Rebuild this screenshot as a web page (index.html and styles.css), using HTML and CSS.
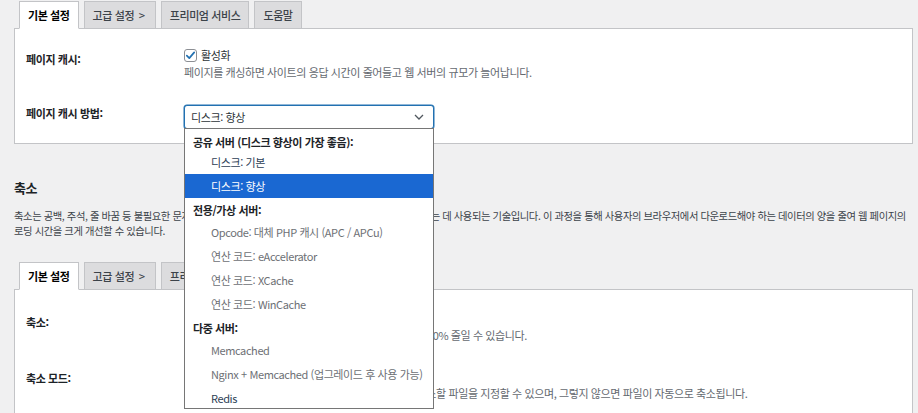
FILE: index.html
```html
<!DOCTYPE html>
<html lang="ko">
<head>
<meta charset="utf-8">
<title>캐시 설정</title>
<link rel="stylesheet" href="styles.css">
</head>
<body>
<div class="page">
  <nav class="tabs">
    <span class="tab active">기본 설정</span>
    <span class="tab">고급 설정 <span class="arrow">&gt;</span></span>
    <span class="tab">프리미엄 서비스</span>
    <span class="tab">도움말</span>
  </nav>
  <section class="panel">
    <div class="form-grid">
      <div class="th">페이지 캐시:</div>
      <div class="td">
        <label class="check"><span class="box"><svg width="13" height="13" viewBox="0 0 13 13"><path d="M2.8 6.6 L5.3 9.1 L10.2 3.4" fill="none" stroke="#2271b1" stroke-width="1.7" stroke-linecap="round" stroke-linejoin="round"/></svg></span>활성화</label>
        <p class="desc">페이지를 캐싱하면 사이트의 응답 시간이 줄어들고 웹 서버의 규모가 늘어납니다.</p>
      </div>
      <div class="th r2">페이지 캐시 방법:</div>
      <div class="td r2">
        <div class="select-wrap">
          <div class="select"><span>디스크: 향상</span><svg width="10" height="6" viewBox="0 0 10 6"><path d="M1 1 L5 5 L9 1" fill="none" stroke="#50575e" stroke-width="1.3"/></svg></div>
          <ul class="listbox">
            <li class="grp first">공유 서버 (디스크 향상이 가장 좋음):</li>
            <li class="opt en">디스크: 기본</li>
            <li class="opt sel">디스크: 향상</li>
            <li class="grp">전용/가상 서버:</li>
            <li class="opt">Opcode: 대체 PHP 캐시 (APC / APCu)</li>
            <li class="opt">연산 코드: eAccelerator</li>
            <li class="opt">연산 코드: XCache</li>
            <li class="opt">연산 코드: WinCache</li>
            <li class="grp">다중 서버:</li>
            <li class="opt">Memcached</li>
            <li class="opt">Nginx + Memcached (업그레이드 후 사용 가능)</li>
            <li class="opt en">Redis</li>
          </ul>
        </div>
      </div>
    </div>
  </section>

  <h2 class="section-title">축소</h2>
  <p class="section-desc">축소는 공백, 주석, 줄 바꿈 등 불필요한 문자를 제거하여 코드 동작에 영향을 주지 않고 파일 크기를 줄이는 데 사용되는 기술입니다. 이 과정을 통해 사용자의 브라우저에서 다운로드해야 하는 데이터의 양을 줄여 웹 페이지의 로딩 시간을 크게 개선할 수 있습니다.</p>

  <nav class="tabs">
    <span class="tab active">기본 설정</span>
    <span class="tab">고급 설정 <span class="arrow">&gt;</span></span>
    <span class="tab">프리미엄 서비스</span>
    <span class="tab">도움말</span>
  </nav>
  <section class="panel panel2">
    <div class="form-grid">
      <div class="th">축소:</div>
      <div class="td">
        <label class="check"><span class="box"></span>활성화</label>
        <p class="desc">축소를 활성화하면, HTML, CSS 및 JS 파일의 크기를 약 10% 줄일 수 있습니다.</p>
      </div>
      <div class="th r2">축소 모드:</div>
      <div class="td r2">
        <div class="radios">
          <label class="check"><span class="radio"></span>자동</label>
          <label class="check"><span class="radio"></span>수동</label>
        </div>
        <p class="desc">수동 모드를 선택하면 테마와 플러그인의 파일 중에서 축소할 파일을 지정할 수 있으며, 그렇지 않으면 파일이 자동으로 축소됩니다.</p>
      </div>
    </div>
  </section>
</div>
</body>
</html>
```

FILE: styles.css
```css
html, body {
  margin: 0;
  height: 413px;
  overflow: hidden;
}
body {
  background: #f0f0f1;
  font-family: "Noto Sans CJK KR", "Noto Sans", sans-serif;
  font-size: 11px;
  letter-spacing: -0.4px;
  color: #1d2327;
}
.page {
  padding: 1px 5px 0 14px;
}
.tabs {
  display: flex;
  gap: 5px;
  padding-left: 5px;
  margin-bottom: -1px;
  position: relative;
  z-index: 1;
}
.tab {
  box-sizing: border-box;
  height: 28px;
  line-height: 26px;
  padding: 0 8px;
  border: 1px solid #c3c4c7;
  background: #dcdcde;
  color: #3c434a;
  font-weight: 500;
}
.tab .arrow {
  margin-left: 2px;
  margin-right: 2px;
}
.tab.active {
  background: #fff;
  border-bottom-color: #fff;
  font-weight: 700;
  color: #000;
}
.panel {
  background: #fff;
  border: 1px solid #c3c4c7;
}
.form-grid {
  display: grid;
  grid-template-columns: 158px 1fr;
  padding-left: 11px;
}
.th {
  font-weight: 700;
  line-height: 17px;
  padding-top: 22px;
}
.td {
  line-height: 17px;
  padding-top: 18px;
}
.th.r2, .td.r2 {
  padding-top: 24px;
  padding-bottom: 14px;
}
.desc {
  margin: 0;
  color: #646970;
}
.check {
  display: flex;
  align-items: center;
  gap: 4px;
  color: #2c3338;
}
.box {
  box-sizing: border-box;
  width: 13px;
  height: 13px;
  border: 1px solid #8c8f94;
  border-radius: 3px;
  background: #fff;
  display: flex;
  align-items: center;
  justify-content: center;
}
.box svg {
  display: block;
  margin: -1px;
}
.radio {
  box-sizing: border-box;
  width: 13px;
  height: 13px;
  border: 1px solid #8c8f94;
  border-radius: 50%;
  background: #fff;
}
.radios {
  display: flex;
  gap: 12px;
}
.select-wrap {
  position: relative;
  width: 250px;
}
.select {
  box-sizing: border-box;
  height: 24px;
  border: 1px solid #2271b1;
  border-radius: 3px;
  box-shadow: 0 0 0 0.5px #2271b1;
  padding: 0 9px 0 6px;
  display: flex;
  align-items: center;
  justify-content: space-between;
  color: #2c3338;
  background: #fff;
}
.listbox {
  position: absolute;
  top: 23px;
  left: 0;
  z-index: 5;
  box-sizing: border-box;
  width: 250px;
  height: 281px;
  margin: 0;
  padding: 0;
  list-style: none;
  border: 1px solid #767676;
  background: #fff;
  overflow: hidden;
}
.grp {
  height: 22px;
  line-height: 24px;
  padding-left: 8px;
  font-weight: 700;
  color: #1d2327;
}
.grp.first {
  height: 21px;
  line-height: 26px;
}
.opt {
  height: 24px;
  line-height: 24px;
  padding-left: 26px;
  color: #6d7075;
}
.opt.en {
  color: #2c3e55;
}
.opt.sel {
  background: #1a68d2;
  color: #fff;
}
.section-title {
  margin: 34px 0 0;
  font-size: 13px;
  line-height: 20px;
  font-weight: 700;
  color: #1d2327;
}
.section-desc {
  margin: 10px 0 24px;
  font-size: 10.3px;
  line-height: 15px;
  color: #3c434a;
}
.panel2 .th {
  padding-top: 24px;
}
.panel2 .td {
  padding-top: 20px;
}
.panel2 .th.r2 {
  padding-top: 26px;
  padding-bottom: 60px;
}
.panel2 .td.r2 {
  padding-top: 24px;
  padding-bottom: 60px;
}
```
